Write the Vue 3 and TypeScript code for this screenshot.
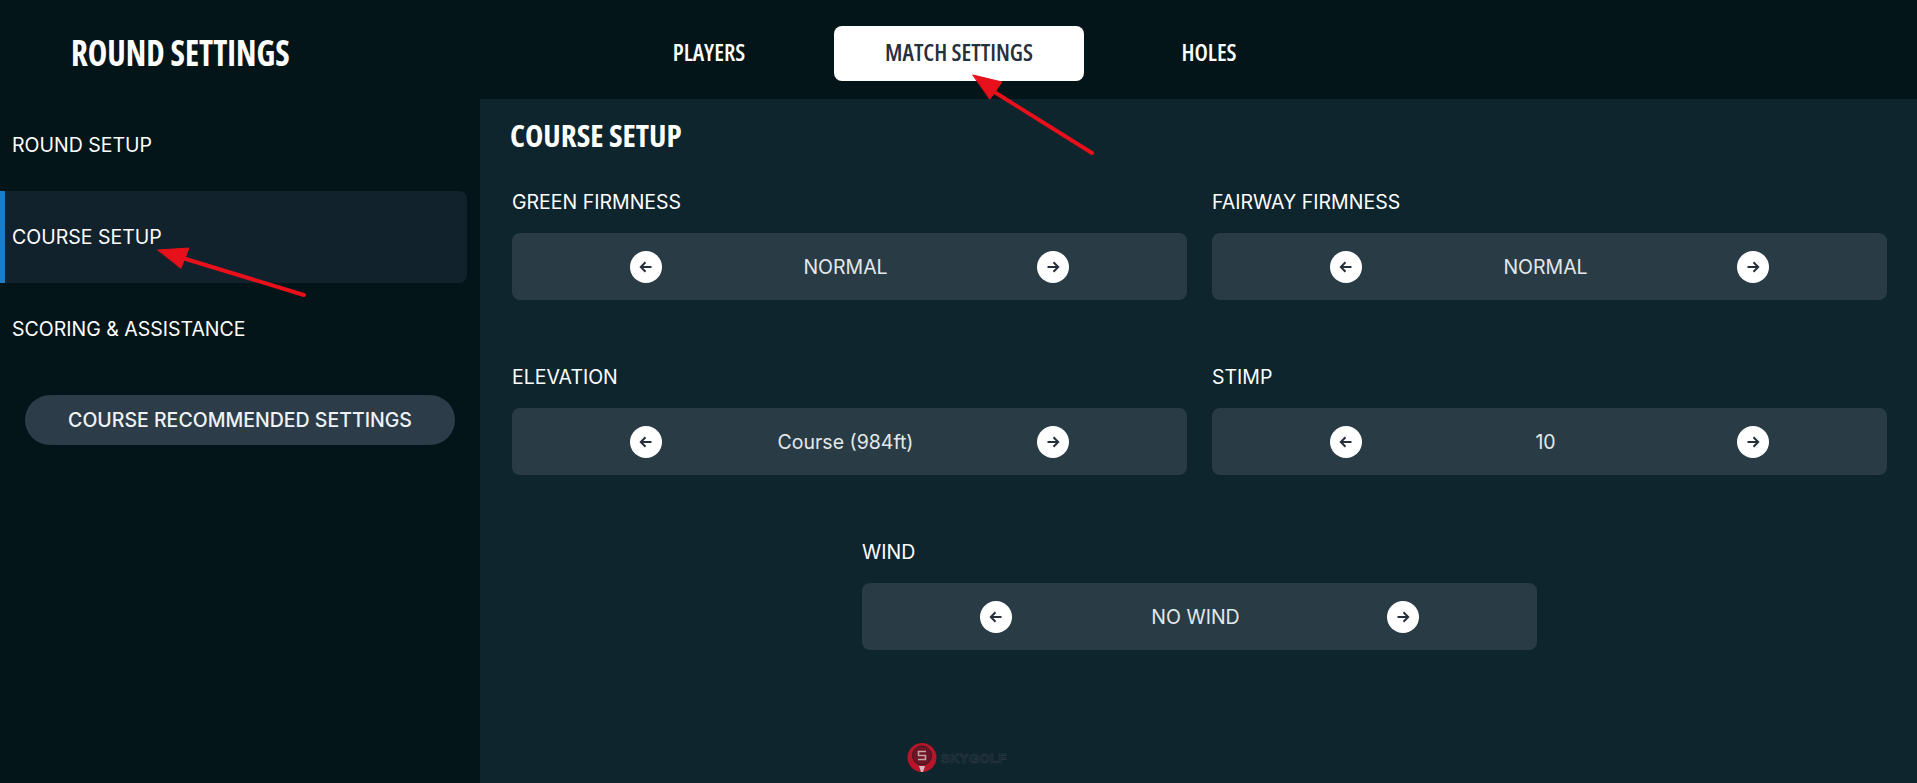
<template>
  <div class="screen">
    <header class="topbar">
      <h1 class="title">ROUND SETTINGS</h1>
      <nav class="tabs">
        <span v-for="tab in tabs" :key="tab" class="tab" :class="{ active: tab === 'MATCH SETTINGS' }">{{ tab }}</span>
      </nav>
    </header>

    <div class="body">
      <aside class="sidebar">
        <div v-for="item in menu" :key="item" class="menu-item" :class="{ selected: item === 'COURSE SETUP' }">{{ item }}</div>
        <div class="recommend">COURSE RECOMMENDED SETTINGS</div>
      </aside>

      <main class="content">
        <h2 class="heading">COURSE SETUP</h2>
        <div class="fields">
          <div v-for="field in fields" :key="field.label" class="field" :class="{ wide: field.label === 'WIND' }">
            <div class="label">{{ field.label }}</div>
            <div class="picker">
              <span class="arrow">
                <svg width="16" height="16" viewBox="0 0 16 16"><path d="M13.5 8H3M7.5 3.2 2.8 8l4.7 4.8" /></svg>
              </span>
              <span class="value">{{ field.value }}</span>
              <span class="arrow">
                <svg width="16" height="16" viewBox="0 0 16 16"><path d="M2.5 8H13M8.5 3.2 13.2 8l-4.7 4.8" /></svg>
              </span>
            </div>
          </div>
        </div>
        <div class="brand">
          <svg width="30" height="30" viewBox="0 0 30 30">
            <circle cx="15" cy="14.5" r="14.5" fill="#b8142a" />
            <circle cx="15" cy="12.5" r="9.5" fill="#6e1424" stroke="#2e1c26" stroke-width="1" />
            <path d="M19 8.5h-7.5v4h7v4H11" fill="none" stroke="#c9a2aa" stroke-width="1.5" />
            <path d="M12 23h6l-2 6h-2z" fill="#d9b7bd" />
          </svg>
          <span class="brand-name">SKYGOLF</span>
        </div>
      </main>
    </div>

    <svg class="marks" width="1917" height="783" viewBox="0 0 1917 783">
      <g fill="#e8101a" stroke="#e8101a" stroke-linecap="round">
        <path d="M304 295 176 256" stroke-width="4" fill="none" />
        <path d="M158 250 189 248 181 268z" stroke-width="1" />
        <path d="M1092 153 988 88" stroke-width="4" fill="none" />
        <path d="M973 75 1002 82 990 99z" stroke-width="1" />
      </g>
    </svg>
  </div>
</template>

<script setup lang="ts">
interface Field {
  label: string
  value: string
}

const tabs = ['PLAYERS', 'MATCH SETTINGS', 'HOLES']
const menu = ['ROUND SETUP', 'COURSE SETUP', 'SCORING & ASSISTANCE']
const fields: Field[] = [
  { label: 'GREEN FIRMNESS', value: 'NORMAL' },
  { label: 'FAIRWAY FIRMNESS', value: 'NORMAL' },
  { label: 'ELEVATION', value: 'Course (984ft)' },
  { label: 'STIMP', value: '10' },
  { label: 'WIND', value: 'NO WIND' }
]
</script>

<style>
html,
body {
  margin: 0;
  background: #031518;
}
</style>

<style scoped>
.screen {
  position: relative;
  width: 1917px;
  height: 783px;
  overflow: hidden;
  display: flex;
  flex-direction: column;
  background: #031518;
  color: #fff;
  font-family: Inter, sans-serif;
}

.topbar {
  height: 99px;
  display: flex;
  align-items: center;
  flex: none;
}

.title {
  width: 584px;
  box-sizing: border-box;
  margin: 5px 0 0;
  padding: 0 0 0 71px;
  font-family: "Open Sans", sans-serif;
  font-size: 35px;
  font-weight: 700;
  font-stretch: 75%;
  transform: scaleX(0.94);
  transform-origin: 71px 50%;
}

.tabs {
  display: flex;
  align-items: center;
  height: 55px;
  margin-top: 7px;
}

.tab {
  width: 250px;
  height: 53px;
  padding-bottom: 2px;
  display: flex;
  align-items: center;
  justify-content: center;
  border-radius: 8px;
  font-family: "Open Sans", sans-serif;
  font-size: 23.5px;
  font-weight: 600;
  font-stretch: 75%;
}

.tab.active {
  background: #fff;
  color: #26303c;
}

.body {
  flex: 1;
  display: flex;
}

.sidebar {
  width: 480px;
  flex: none;
}

.menu-item {
  height: 92px;
  width: 467px;
  box-sizing: border-box;
  display: flex;
  align-items: center;
  padding-left: 12px;
  font-size: 19.5px;
  border-radius: 0 8px 8px 0;
}

.menu-item.selected {
  background: #11222c;
  padding-left: 7px;
  border-left: 5px solid #1e7cc4;
}

.recommend {
  width: 430px;
  height: 50px;
  margin: 20px 0 0 25px;
  display: flex;
  align-items: center;
  justify-content: center;
  border-radius: 25px;
  background: #2c3d49;
  font-size: 19.5px;
  font-weight: 500;
  color: #f0f3f5;
}

.content {
  position: relative;
  flex: 1;
  background: #0e252d;
  padding-left: 32px;
}

.heading {
  margin: 13px 0 0 -2px;
  font-family: "Open Sans", sans-serif;
  font-size: 31px;
  line-height: 46px;
  font-weight: 700;
  font-stretch: 75%;
}

.fields {
  width: 1375px;
  margin-top: 28px;
  display: grid;
  grid-template-columns: 675px 675px;
  column-gap: 25px;
  row-gap: 61px;
}

.field.wide {
  grid-column: 1 / 3;
  justify-self: center;
  width: 675px;
}

.label {
  height: 32px;
  display: flex;
  align-items: center;
  font-size: 19.5px;
  margin-bottom: 15px;
}

.picker {
  height: 67px;
  box-sizing: border-box;
  padding: 0 118px 0 118px;
  display: flex;
  align-items: center;
  border-radius: 8px;
  background: #293c46;
}

.value {
  flex: 1;
  text-align: center;
  padding-right: 8px;
  font-size: 19.5px;
  color: #e4e8ea;
}

.arrow {
  width: 32px;
  height: 32px;
  flex: none;
  display: flex;
  align-items: center;
  justify-content: center;
  border-radius: 50%;
  background: #fff;
}

.arrow path {
  fill: none;
  stroke: #26303c;
  stroke-width: 2;
}

.brand {
  position: absolute;
  left: 427px;
  top: 644px;
  display: flex;
  align-items: center;
  gap: 4px;
}

.brand-name {
  font: 700 13px "Liberation Sans", sans-serif;
  letter-spacing: 0.4px;
  color: transparent;
  -webkit-text-stroke: 0.7px #2e3a45;
}

.marks {
  position: absolute;
  left: 0;
  top: 0;
  pointer-events: none;
}
</style>
